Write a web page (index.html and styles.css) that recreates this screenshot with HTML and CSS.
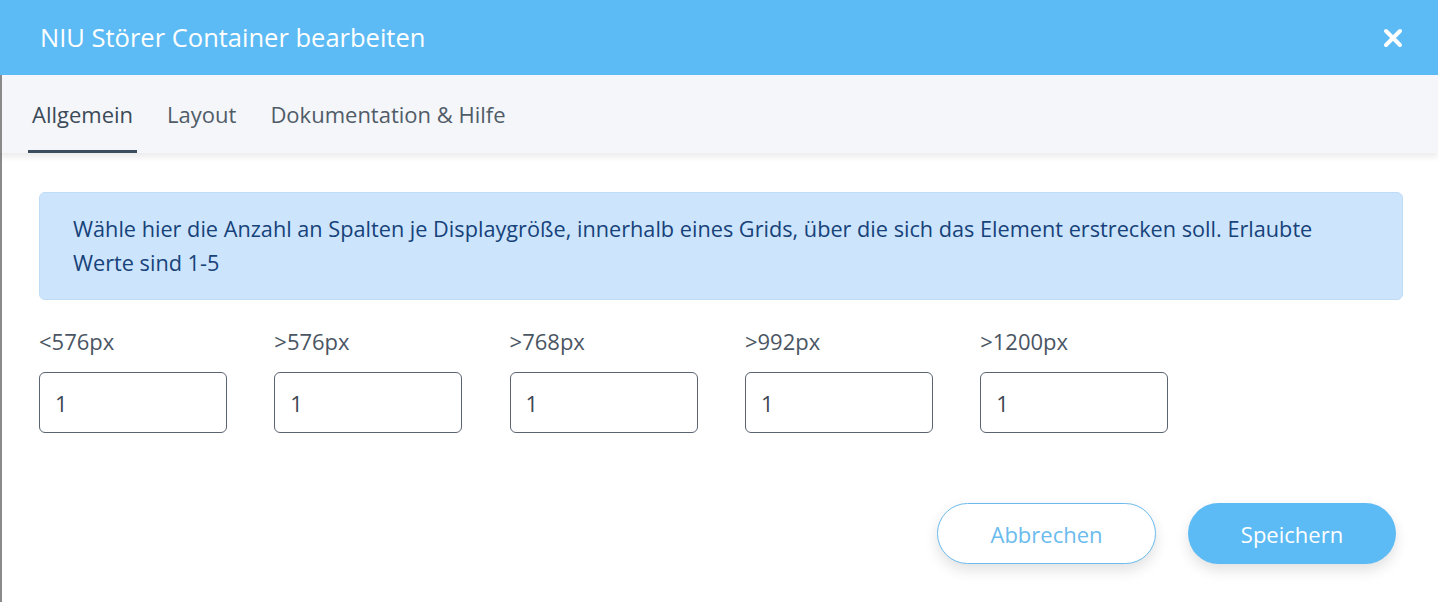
FILE: index.html
```html
<!DOCTYPE html>
<html lang="de">
<head>
    <meta charset="UTF-8">
    <meta name="viewport" content="width=device-width, initial-scale=1.0">
    <title>NIU Störer Container bearbeiten</title>
    <link rel="stylesheet" href="styles.css">
</head>

<body>
    <div class="modal">
        <header class="modal-header">
            <h1>NIU Störer Container bearbeiten</h1>
            <span class="close">
                <svg width="20" height="20" viewBox="0 0 20 20">
                    <path d="M3 3 L17 17 M17 3 L3 17" stroke="#fff" stroke-width="4" stroke-linecap="round"/>
                </svg>
            </span>
        </header>

        <nav class="tabs">
            <a href="#" class="tab active">Allgemein</a>
            <a href="#" class="tab">Layout</a>
            <a href="#" class="tab">Dokumentation &amp; Hilfe</a>
        </nav>

        <div class="modal-body">
            <div class="info">
                Wähle hier die Anzahl an Spalten je Displaygröße, innerhalb eines Grids, über die sich das Element erstrecken soll. Erlaubte Werte sind 1-5
            </div>

            <div class="fields">
                <label class="field">
                    <span>&lt;576px</span>
                    <input type="text" value="1">
                </label>
                <label class="field">
                    <span>&gt;576px</span>
                    <input type="text" value="1">
                </label>
                <label class="field">
                    <span>&gt;768px</span>
                    <input type="text" value="1">
                </label>
                <label class="field">
                    <span>&gt;992px</span>
                    <input type="text" value="1">
                </label>
                <label class="field">
                    <span>&gt;1200px</span>
                    <input type="text" value="1">
                </label>
            </div>

            <div class="actions">
                <button class="btn btn-outline">Abbrechen</button>
                <button class="btn btn-primary">Speichern</button>
            </div>
        </div>
    </div>
</body>
</html>
```

FILE: styles.css
```css
body {
    font-family: "Open Sans", "Liberation Sans", sans-serif;
    margin: 0;
    padding: 0;
    background-color: #fff;
}

.modal {
    width: 1438px;
    height: 602px;
    overflow: hidden;
}

.modal-header {
    background-color: #5cbaf4;
    height: 75px;
    display: flex;
    align-items: center;
    justify-content: space-between;
    padding: 0 35px 0 40px;
    box-sizing: border-box;
}

.modal-header h1 {
    margin: 0 0 2px;
    color: #fff;
    font-size: 25.5px;
    font-weight: 400;
}

.close {
    display: flex;
    cursor: pointer;
}

.tabs {
    background-color: #f5f6fa;
    height: 78px;
    display: flex;
    align-items: stretch;
    padding-left: 26px;
    gap: 26px;
    box-shadow: 0 4px 6px rgba(0, 0, 0, 0.08);
    border-left: 2px solid #8a8a8a;
    position: relative;
}

.tab {
    display: flex;
    align-items: center;
    padding: 0 4px;
    color: #505c68;
    font-size: 22px;
    text-decoration: none;
    border-bottom: 3px solid transparent;
    padding-top: 3px;
}

.tab.active {
    color: #3c4a58;
    border-bottom-color: #3d4f5f;
}

.modal-body {
    border-left: 2px solid #8a8a8a;
    padding: 39px 35px 0 37px;
    height: 449px;
}

.info {
    background-color: #cce5fc;
    border: 1px solid #bfdcf7;
    border-radius: 6px;
    color: #17427a;
    font-size: 21.7px;
    line-height: 34px;
    padding: 19px 34px 19px 33px;
}

.fields {
    display: flex;
    gap: 47.3px;
    margin-top: 26px;
}

.field {
    display: flex;
    flex-direction: column;
    gap: 16px;
}

.field span {
    color: #4a5563;
    font-size: 22px;
    line-height: 30px;
}

.field input {
    width: 188px;
    height: 61px;
    box-sizing: border-box;
    border: 1px solid #5a6470;
    border-radius: 6px;
    padding: 0 15px;
    font-family: inherit;
    font-size: 22px;
    color: #3d4752;
}

.actions {
    display: flex;
    justify-content: flex-end;
    gap: 32px;
    margin-top: 70px;
    padding-right: 7px;
}

.btn {
    height: 61px;
    border-radius: 31px;
    font-family: inherit;
    font-size: 22px;
    cursor: pointer;
    box-shadow: 0 6px 14px rgba(0, 0, 0, 0.12);
}

.btn-outline {
    width: 219px;
    background: #fff;
    color: #6bbbee;
    border: 1px solid #6bbbee;
}

.btn-primary {
    width: 208px;
    background: #5cbaf4;
    color: #fff;
    border: none;
}
```
